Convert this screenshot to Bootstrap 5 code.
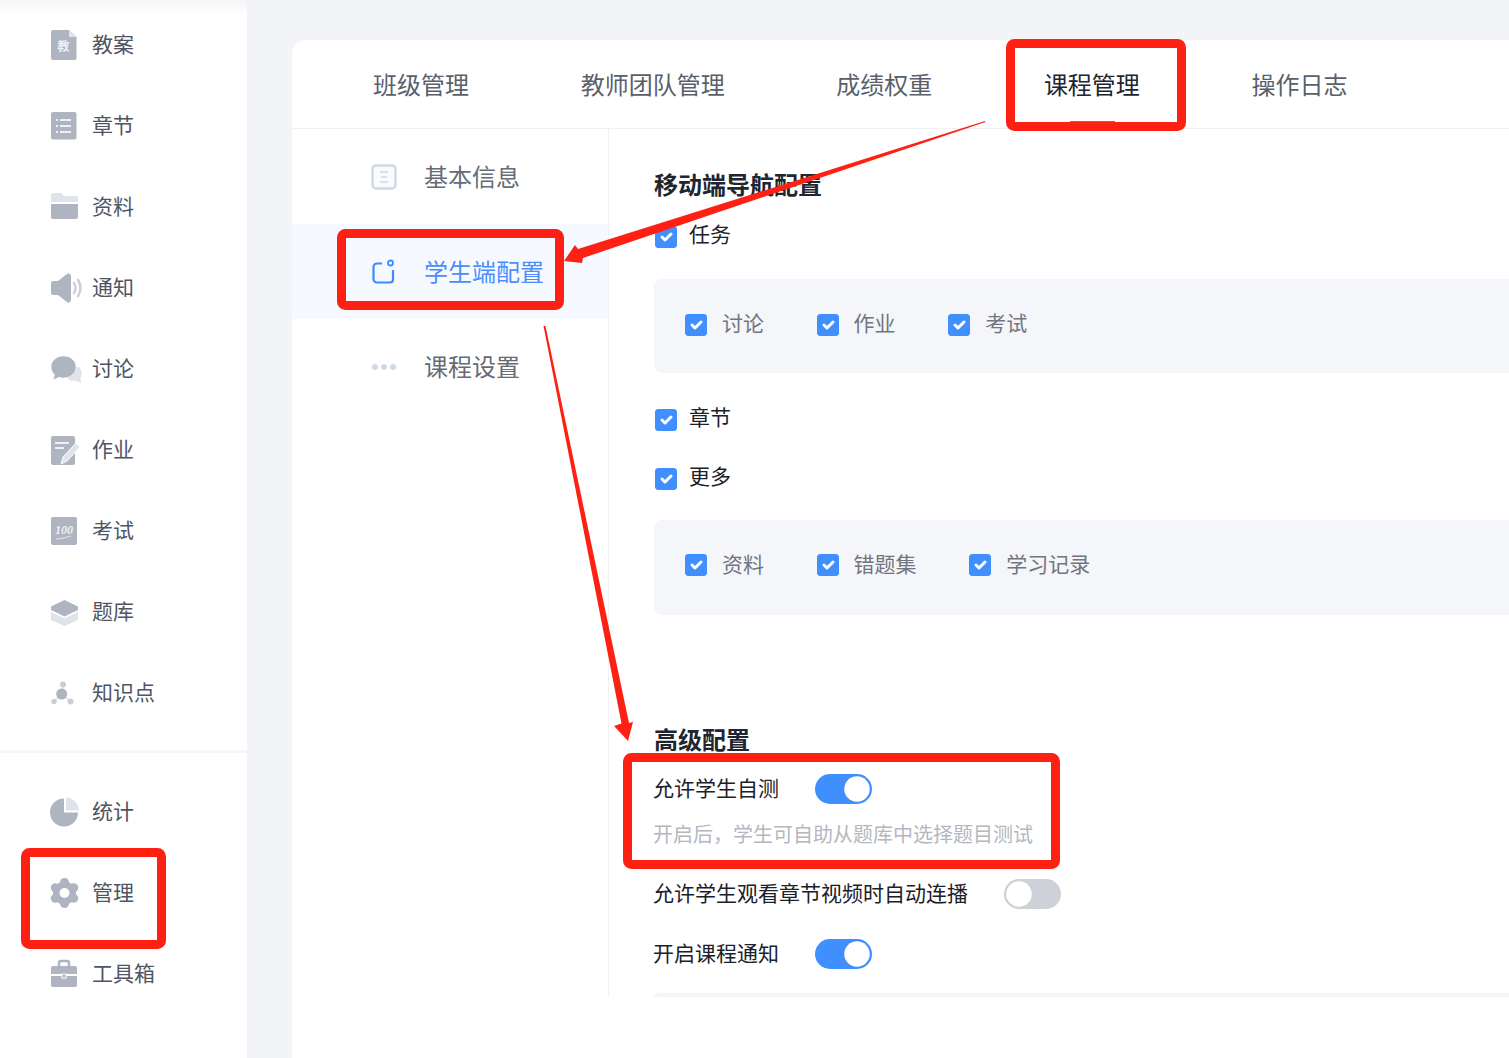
<!DOCTYPE html>
<html lang="zh-CN">
<head>
    <meta charset="utf-8">
    <title>课程管理</title>
    <link rel="stylesheet" href="https://cdn.jsdelivr.net/npm/bootstrap@5.3.0/dist/css/bootstrap.min.css">
    <style>
        html, body { height: 1058px; overflow: hidden; }
        body { font-family: "Liberation Sans", "Noto Sans CJK SC", sans-serif; background: #f3f4f8; color: #1f2430; }
        .side-bar { width: 247px; height: 1058px; background: #fff; flex: none; position: relative; }
        .side-bar::before { content: ""; position: absolute; left: 0; right: 0; top: 0; height: 14px; background: linear-gradient(#f4f5f8, #fff); }
        .side-group { padding-top: 4px; }
        .side-group + .side-group { border-top: 3px solid #f5f6f8; margin-top: 17px; padding-top: 18px; }
        .side-item { height: 81px; padding-left: 50px; gap: 10px; font-size: 21px; color: #4f5563; }
        .side-item svg { flex: none; display: block; }
        .side-item svg.icon-wide { margin-right: -2px; }
        .side-item svg.icon-gear { margin: 0 1px 0 -1px; }
        .main-area { flex: 1; min-width: 0; padding: 40px 0 0 45px; overflow: hidden; height: 1058px; }
        .main-card { width: 1400px; height: 1018px; background: #fff; border-radius: 14px 0 0 0; }
        .tab-bar { height: 89px; padding-left: 25.3px; border-bottom: 1px solid #f0f1f4; }
        .tab-bar .nav-link { position: relative; height: 88px; line-height: 92px; padding: 0 55.8px; font-size: 24px; color: #5a5f6b; }
        .tab-bar .nav-link.active-tab { color: #20252f; }
        .tab-bar .nav-link.active-tab::after { content: ""; position: absolute; left: 82px; width: 45px; top: 81px; height: 2px; background: #3d82e6; }
        .menu-col { width: 317px; height: 868px; flex: none; border-right: 1px solid #f0f1f4; }
        .menu-item { height: 95px; padding-left: 79px; gap: 27px; font-size: 24px; color: #666b75; }
        .menu-item svg { flex: none; display: block; }
        .menu-item span { padding-top: 3px; }
        .menu-item.menu-on { background: #f6f9ff; color: #4b8dfb; width: 316px; }
        .conf-col { padding: 40px 0 0 45px; flex: 1; min-width: 0; height: 868px; position: relative; }
        .conf-title { font-size: 24px; line-height: 34px; font-weight: 700; color: #20252f; margin: 0; }
        .check-row { height: 30px; margin: 0; padding: 0; gap: 12px; font-size: 21px; color: #1c2029; }
        .form-check-input.tick { width: 22px; height: 22px; margin: 3px 0 0 1px; flex: none; border-radius: 3px; background-color: #3f8fff; border-color: #3f8fff; }
        .sub-panel { height: 94px; background: #f5f6fa; border-radius: 8px; padding: 0 0 4px 31px; gap: 52.6px; }
        .sub-panel.panel-tall { height: 95px; padding-bottom: 6px; }
        .sub-panel .check-row { color: #71757f; gap: 15px; }
        .sub-panel .form-check-input.tick { margin: 1px 0 0 0; }
        .switch-row { height: 30px; gap: 36px; font-size: 21px; color: #1c2029; margin-left: -1px; }
        .form-switch.slide { padding: 0; margin: 0; min-height: 0; height: 30px; }
        .form-switch.slide .form-check-input { width: 57px; height: 30px; margin: 0; border: 0; float: none; display: block; background-color: #ced2d8; --bs-form-switch-bg: url("data:image/svg+xml,%3csvg xmlns='http://www.w3.org/2000/svg' viewBox='-4 -4 8 8'%3e%3ccircle r='3.4' fill='%23fff'/%3e%3c/svg%3e"); background-image: var(--bs-form-switch-bg); }
        .form-switch.slide .form-check-input:checked { background-color: #3f8fff; }
        .hint-text { font-size: 20px; line-height: 30px; color: #b4b7bf; margin: 16px 0 0 -1px; }
        .foot-bar { position: absolute; left: 45px; right: 0; bottom: 0; height: 4px; background: #f5f6fa; border-radius: 6px 0 0 0; }
        .mark-layer { position: absolute; left: 0; top: 0; width: 1509px; height: 1058px; pointer-events: none; }
        .gap-t1 { margin-top: 17px; }
        .gap-t2 { margin-top: 29px; }
        .gap-t3 { margin-top: 30px; }
        .gap-t4 { margin-top: 28px; }
        .gap-t5 { margin-top: 109px; }
        .gap-t6 { margin-top: 16px; }
        .gap-t7 { margin-top: 30px; }
        .gap-t8 { margin-top: 29px; }
    </style>
</head>
<body class="d-flex">
    <!-- menu lateral -->
    <aside class="side-bar">
        <div class="side-group">
            <div class="side-item d-flex align-items-center">
                <svg width="32" height="32" viewBox="0 0 32 32"><path d="M3 1H19L26.5 8V29a2 2 0 0 1-2 2H3a2 2 0 0 1-2-2V3a2 2 0 0 1 2-2z" fill="#aeb4c0"/><path d="M19 1L26.5 8H19z" fill="#dfe3ea"/><text x="13.5" y="22" font-size="12" font-weight="700" fill="#eef0f4" text-anchor="middle" font-family="Noto Sans CJK SC">教</text></svg>
                <span>教案</span>
            </div>
            <div class="side-item d-flex align-items-center">
                <svg width="32" height="32" viewBox="0 0 32 32"><rect x="1" y="2" width="25.5" height="27.5" rx="2" fill="#aeb4c0"/><path d="M6 9h2v2H6zM6 15h2v2H6zM6 21h2v2H6zM10 9h11v2H10zM10 15h11v2H10zM10 21h11v2H10z" fill="#eef0f4"/></svg>
                <span>章节</span>
            </div>
            <div class="side-item d-flex align-items-center">
                <svg width="32" height="32" viewBox="0 0 32 32"><path d="M1 4a2 2 0 0 1 2-2h8l3 3h12a2 2 0 0 1 2 2v4H1z" fill="#dfe3ea"/><path d="M1 13h27v13a2 2 0 0 1-2 2H3a2 2 0 0 1-2-2z" fill="#aeb4c0"/></svg>
                <span>资料</span>
            </div>
            <div class="side-item d-flex align-items-center">
                <svg class="icon-wide" width="34" height="32" viewBox="0 0 34 32"><path d="M1 11a2 2 0 0 1 2-2h5l9-7a2.5 2.5 0 0 1 4 2v24a2.500 2.500 0 0 1-4 2l-9-7H3a2 2 0 0 1-2-2z" fill="#aeb4c0"/><path d="M24 11q3 5 0 10M28 8q5 8 0 16" fill="none" stroke="#c8cdd6" stroke-width="2.400" stroke-linecap="round"/></svg>
                <span>通知</span>
            </div>
            <div class="side-item d-flex align-items-center">
                <svg width="32" height="32" viewBox="0 0 32 32"><path d="M22 14h7a9 9 0 0 1 1.500 11l.5 5-6-2.500a9 9 0 0 1-7-1z" fill="#dfe3ea"/><path d="M13.500 3C20.500 3 26 7.700 26 14s-5.500 11-12.500 11c-1.700 0-3-.2-4.500-.7L3 27l1.500-5.500C2.300 19.500 1 17 1 14 1 7.700 6.500 3 13.500 3z" fill="#aeb4c0" stroke="#fff" stroke-width=".6"/></svg>
                <span>讨论</span>
            </div>
            <div class="side-item d-flex align-items-center">
                <svg width="32" height="32" viewBox="0 0 32 32"><rect x="1" y="2" width="24" height="29" rx="2" fill="#aeb4c0"/><path d="M5 8h14v2H5zM5 13h9v2H5z" fill="#eef0f4"/><path d="M11 30l2-7L26 9l4 4-13 14z" fill="#dfe3ea" stroke="#fff" stroke-width="1"/></svg>
                <span>作业</span>
            </div>
            <div class="side-item d-flex align-items-center">
                <svg width="32" height="32" viewBox="0 0 32 32"><rect x="1" y="2" width="26" height="28" rx="2" fill="#aeb4c0"/><text x="14" y="18.500" font-size="12" font-weight="700" font-style="italic" fill="#eef0f4" text-anchor="middle" font-family="Liberation Serif">100</text><path d="M6 24q8-.5 15-3" fill="none" stroke="#dfe3ea" stroke-width="1.200"/></svg>
                <span>考试</span>
            </div>
            <div class="side-item d-flex align-items-center">
                <svg width="32" height="32" viewBox="0 0 32 32"><path d="M1 16l13.500 6.500L28 16v8l-13.500 6L1 24z" fill="#dfe3ea"/><path d="M14.500 4L28 10.500v3.500l-13.500 6.500L1 14v-3.500z" fill="#aeb4c0"/></svg>
                <span>题库</span>
            </div>
            <div class="side-item d-flex align-items-center">
                <svg width="32" height="32" viewBox="0 0 32 32"><path d="M13 8l-1 9M4 24l8-7M20 24l-8-7" stroke="#dfe3ea" stroke-width="1.500"/><circle cx="13" cy="7.500" r="3" fill="#c8cdd6"/><circle cx="4" cy="24.500" r="2.700" fill="#c8cdd6"/><circle cx="20.500" cy="24.500" r="3" fill="#c8cdd6"/><circle cx="11.700" cy="17" r="5.500" fill="#aeb4c0"/></svg>
                <span>知识点</span>
            </div>
        </div>
        <div class="side-group">
            <div class="side-item d-flex align-items-center">
                <svg width="32" height="32" viewBox="0 0 32 32"><path d="M14 2.500V16.500H28A14 14 0 1 1 14 2.500z" fill="#aeb4c0"/><path d="M16 1.500A13.500 13.500 0 0 1 29 14.500H16z" fill="#dfe3ea"/></svg>
                <span>统计</span>
            </div>
            <div class="side-item d-flex align-items-center">
                <svg class="icon-gear" width="32" height="32" viewBox="0 0 32 32"><g fill="#aeb4c0"><circle cx="15.500" cy="16" r="11.500"/><circle cx="15.500" cy="5.500" r="4.500"/><circle cx="15.500" cy="26.500" r="4.500"/><circle cx="6.300" cy="10.700" r="4.500"/><circle cx="24.700" cy="10.700" r="4.500"/><circle cx="6.300" cy="21.300" r="4.500"/><circle cx="24.700" cy="21.300" r="4.500"/></g><circle cx="15.500" cy="16" r="5" fill="#fff"/></svg>
                <span>管理</span>
            </div>
            <div class="side-item d-flex align-items-center">
                <svg width="32" height="32" viewBox="0 0 32 32"><path d="M9 8V5a2 2 0 0 1 2-2h6a2 2 0 0 1 2 2v3" fill="none" stroke="#aeb4c0" stroke-width="2.500"/><path d="M1 10a2 2 0 0 1 2-2h22a2 2 0 0 1 2 2v6H1z" fill="#aeb4c0"/><path d="M1 18h26v9a2 2 0 0 1-2 2H3a2 2 0 0 1-2-2z" fill="#aeb4c0"/><rect x="12" y="16" width="4" height="4" fill="#aeb4c0" stroke="#fff"/></svg>
                <span>工具箱</span>
            </div>
        </div>
    </aside>

    <main class="main-area">
        <div class="main-card">
            <ul class="nav tab-bar">
                <li class="nav-item"><a class="nav-link" href="#">班级管理</a></li>
                <li class="nav-item"><a class="nav-link" href="#">教师团队管理</a></li>
                <li class="nav-item"><a class="nav-link" href="#">成绩权重</a></li>
                <li class="nav-item"><a class="nav-link active-tab" href="#">课程管理</a></li>
                <li class="nav-item"><a class="nav-link" href="#">操作日志</a></li>
            </ul>
            <div class="d-flex">
                <div class="menu-col">
                    <div class="menu-item d-flex align-items-center">
                        <svg width="26" height="26" viewBox="0 0 26 26"><rect x="1.500" y="1.500" width="23" height="23" rx="3.500" fill="#f9fafc" stroke="#cfd8e6" stroke-width="2.400"/><path d="M9 8h8M10 13h6M9 18h8" stroke="#cfd8e6" stroke-width="1.600"/></svg>
                        <span>基本信息</span>
                    </div>
                    <div class="menu-item menu-on d-flex align-items-center">
                        <svg width="26" height="26" viewBox="0 0 26 26"><path d="M11 4.500H6a3.500 3.500 0 0 0-3.500 3.500V20A3.500 3.500 0 0 0 6 23.500h13a3 3 0 0 0 3-3V11" fill="none" stroke="#3d8bff" stroke-width="2.200"/><circle cx="19.500" cy="4" r="2.500" fill="none" stroke="#3d8bff" stroke-width="1.800"/></svg>
                        <span>学生端配置</span>
                    </div>
                    <div class="menu-item d-flex align-items-center">
                        <svg width="26" height="26" viewBox="0 0 26 26"><circle cx="4" cy="13" r="3" fill="#cfd8e6"/><circle cx="13" cy="13" r="3" fill="#cfd8e6"/><circle cx="22" cy="13" r="3" fill="#cfd8e6"/></svg>
                        <span>课程设置</span>
                    </div>
                </div>
                <div class="conf-col">
                    <h2 class="conf-title">移动端导航配置</h2>
                    <div class="check-row form-check d-flex align-items-center gap-t1"><input class="form-check-input tick" type="checkbox" checked><span>任务</span></div>
                    <div class="sub-panel d-flex align-items-center gap-t2">
                        <div class="check-row form-check d-flex align-items-center"><input class="form-check-input tick" type="checkbox" checked><span>讨论</span></div>
                        <div class="check-row form-check d-flex align-items-center"><input class="form-check-input tick" type="checkbox" checked><span>作业</span></div>
                        <div class="check-row form-check d-flex align-items-center"><input class="form-check-input tick" type="checkbox" checked><span>考试</span></div>
                    </div>
                    <div class="check-row form-check d-flex align-items-center gap-t3"><input class="form-check-input tick" type="checkbox" checked><span>章节</span></div>
                    <div class="check-row form-check d-flex align-items-center gap-t8"><input class="form-check-input tick" type="checkbox" checked><span>更多</span></div>
                    <div class="sub-panel panel-tall d-flex align-items-center gap-t4">
                        <div class="check-row form-check d-flex align-items-center"><input class="form-check-input tick" type="checkbox" checked><span>资料</span></div>
                        <div class="check-row form-check d-flex align-items-center"><input class="form-check-input tick" type="checkbox" checked><span>错题集</span></div>
                        <div class="check-row form-check d-flex align-items-center"><input class="form-check-input tick" type="checkbox" checked><span>学习记录</span></div>
                    </div>
                    <h2 class="conf-title gap-t5">高级配置</h2>
                    <div class="switch-row d-flex align-items-center gap-t6">
                        <span>允许学生自测</span>
                        <div class="form-check form-switch slide"><input class="form-check-input" type="checkbox" checked></div>
                    </div>
                    <p class="hint-text">开启后，学生可自助从题库中选择题目测试</p>
                    <div class="switch-row d-flex align-items-center gap-t8">
                        <span>允许学生观看章节视频时自动连播</span>
                        <div class="form-check form-switch slide"><input class="form-check-input" type="checkbox"></div>
                    </div>
                    <div class="switch-row d-flex align-items-center gap-t7">
                        <span>开启课程通知</span>
                        <div class="form-check form-switch slide"><input class="form-check-input" type="checkbox" checked></div>
                    </div>
                    <div class="foot-bar"></div>
                </div>
            </div>
        </div>
    </main>

    <!-- anotaciones rojas sobre la captura -->
    <svg class="mark-layer" viewBox="0 0 1509 1058">
        <g fill="none" stroke="#ff2014" stroke-width="9">
            <rect x="1010.500" y="43.500" width="171" height="83" rx="4"/>
            <rect x="341.500" y="233.500" width="218" height="72" rx="4"/>
            <rect x="627.500" y="757.500" width="428" height="107" rx="4"/>
            <rect x="25.500" y="852.500" width="136" height="92" rx="4"/>
        </g>
        <g fill="#ff2014">
            <path d="M985.500 122L583 258 582 263 564 261 575 245 578 249 985 121z"/>
            <path d="M543.500 326L545.500 326 629 723 633 722 628 741 614 726 621.500 723.500z"/>
        </g>
    </svg>
    <script src="https://cdn.jsdelivr.net/npm/bootstrap@5.3.0/dist/js/bootstrap.bundle.min.js"></script>
</body>
</html>
